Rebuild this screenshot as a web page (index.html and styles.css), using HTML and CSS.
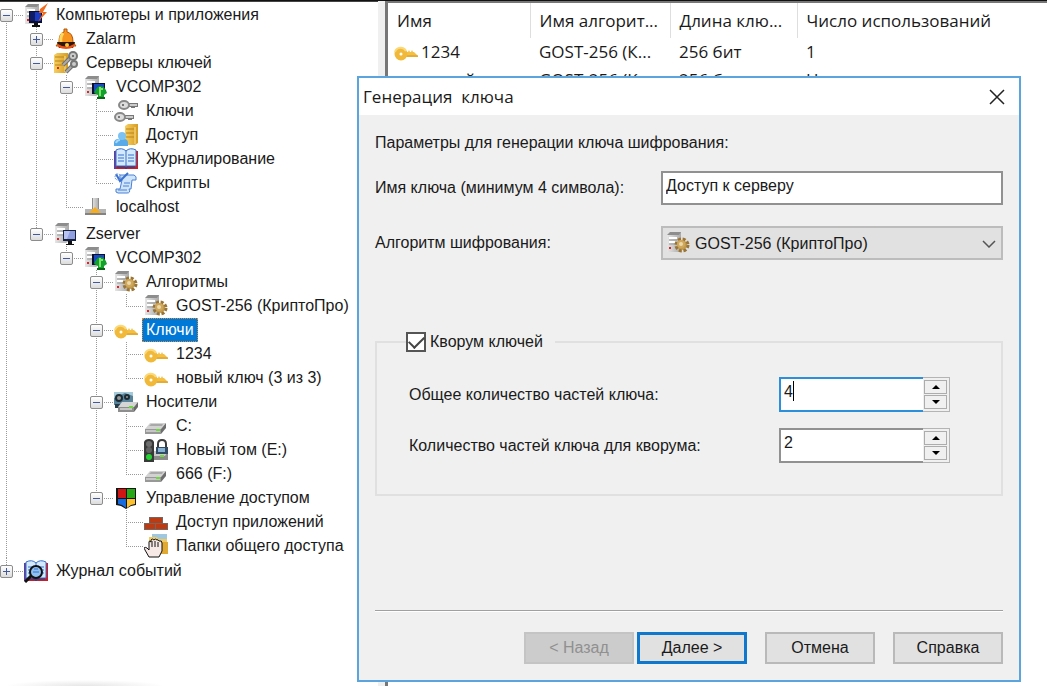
FILE: index.html
```
<!DOCTYPE html>
<html lang="ru">
<head>
    <meta charset="utf-8">
    <title>Генерация ключа</title>
    <link rel="stylesheet" href="styles.css">
</head>
<body>
    <!-- Icon set, all on a 24x24 grid -->
    <svg class="defs" width="0" height="0" aria-hidden="true">
        <linearGradient id="steel" x1="0" x2="1"><stop offset="0" stop-color="#e6e6e6"/><stop offset="1" stop-color="#a9a9a9"/></linearGradient>
        <linearGradient id="gold" x1="0" x2="1"><stop offset="0" stop-color="#f6cf62"/><stop offset="1" stop-color="#d69c22"/></linearGradient>
        <symbol id="tower" viewBox="0 0 24 24">
            <path d="M1 4l3-3h11v18l-3 2H1z" fill="url(#steel)"/>
            <path d="M1 4l3-3h11l-2 3z" fill="#8d8d8d"/>
            <path d="M3 7h8M3 11h8" stroke="#fff" stroke-width="2"/>
            <path d="M3 9h8M3 13h8" stroke="#9a9a9a"/>
            <path d="M3 16h2v2H3z" fill="#d8262c"/>
        </symbol>
        <symbol id="key" viewBox="0 0 24 24">
            <path d="M12 14v-2h2l1-2 1 2h1l1-2 1 2h1l4 4v1H12z" fill="#f3bf45"/>
            <path d="M12 16h12" stroke="#d79a24"/>
            <circle cx="7" cy="14" r="4" fill="none" stroke="#f1b93a" stroke-width="5"/>
            <path d="M1 12a6 6 0 0 1 11-1" fill="none" stroke="#fbd978" stroke-width="2"/>
        </symbol>
        <symbol id="gear" viewBox="0 0 24 24">
            <circle cx="16" cy="14" r="5" fill="#c39a4c"/>
            <circle cx="16" cy="14" r="6" fill="none" stroke="#9a7434" stroke-width="3" stroke-dasharray="3 1.7"/>
            <circle cx="15" cy="13" r="4" fill="#cfa85c"/>
            <circle cx="15" cy="13" r="2" fill="#ecd9ab"/>
        </symbol>
        <symbol id="algorithm" viewBox="0 0 24 24"><use href="#tower"/><use href="#gear"/></symbol>
        <symbol id="computer" viewBox="0 0 24 24">
            <use href="#tower"/>
            <path d="M9 8h13v11H9z" fill="#17223f"/><path d="M10 9h11v8H10z" fill="#8f9fe0"/>
            <path d="M10 9h6l-3 8h-3z" fill="#b9c3f1"/><path d="M14 19h4v3h-4zM12 22h8v1h-8z" fill="#111"/>
        </symbol>
        <symbol id="computer-app" viewBox="0 0 24 24">
            <use href="#tower"/>
            <path d="M5 8h13v12H5z" fill="#0b1030"/><path d="M6 9h11v9H6z" fill="#1b3cc0"/>
            <path d="M6 9h5v9H6z" fill="#101c66"/><path d="M10 20h4v3h-4zM8 22h8v2H8z" fill="#111"/>
            <path d="M24 0l-8 6-1 4h4l-5 9 9-10h-4z" fill="#f26a1b"/>
        </symbol>
        <symbol id="computer-on" viewBox="0 0 24 24">
            <use href="#tower"/>
            <path d="M8 8h13v11H8z" fill="#0b1030"/><path d="M10 9h10v8H10z" fill="#1a49c4"/>
            <path d="M10 18q2-6 6-7 5 0 7 7l-3 2v3h-6v-3z" fill="#14a02c"/>
            <path d="M16 12v9M15 14h4" stroke="#7ce66b" stroke-width="2"/><path d="M13 22h8v2h-8z" fill="#0a6614"/>
        </symbol>
        <symbol id="bell" viewBox="0 0 24 24">
            <path d="M10 5V2h3v3q6 1 6 10l3 4H2l3-4Q5 6 10 5z" fill="#f7941d" stroke="#b65309"/>
            <path d="M9 6q-3 4-2 9" stroke="#ffd65c" stroke-width="3" fill="none"/>
            <path d="M3 15h18l-2 6H5z" fill="#2d1605"/><path d="M4 17q8 5 16 0v3q-8 4-16 0z" fill="#e8521a"/>
            <circle cx="13" cy="18" r="2" fill="#ffc533"/>
        </symbol>
        <symbol id="grey-key" viewBox="0 0 24 24">
            <path d="M11 6h13M19 6v3" stroke="#777" stroke-width="4"/><path d="M11 6h12" stroke="#ccc" stroke-width="2"/>
            <ellipse cx="10" cy="6" rx="5" ry="4" fill="#ddd" stroke="#888" stroke-width="2"/>
            <circle cx="9" cy="6" r="1" fill="#555"/>
        </symbol>
        <symbol id="grey-keys" viewBox="0 0 24 24">
            <use href="#grey-key"/>
            <path d="M8 18h12M16 18v3" stroke="#777" stroke-width="4"/><path d="M8 18h11" stroke="#ccc" stroke-width="2"/>
            <ellipse cx="6" cy="18" rx="5" ry="4" fill="#ddd" stroke="#888" stroke-width="2"/><circle cx="5" cy="18" r="1" fill="#555"/>
        </symbol>
        <symbol id="gold-tower" viewBox="0 0 24 24">
            <path d="M0 4l3-2h11v18l-3 2H0z" fill="url(#gold)"/>
            <path d="M1 6h9M1 10h9M1 14h9" stroke="#b98319"/><path d="M11 5v16" stroke="#fbe08f"/>
            <path d="M3 16h2v2H3z" fill="#d8262c"/>
        </symbol>
        <symbol id="key-server" viewBox="0 0 24 24">
            <use href="#gold-tower"/>
            <path d="M18 5l-9 9M21 12l-9 9" stroke="#6e6e6e" stroke-width="4"/>
            <path d="M18 5l-9 9M21 12l-9 9" stroke="#aaa" stroke-width="2"/>
            <circle cx="19" cy="5" r="4" fill="#ccc" stroke="#777" stroke-width="2"/>
            <circle cx="20" cy="13" r="3" fill="#ccc" stroke="#777" stroke-width="2"/>
            <circle cx="19" cy="5" r="1" fill="#555"/>
        </symbol>
        <symbol id="access" viewBox="0 0 24 24">
            <path d="M11 3l3-2h10v19l-3 2H11z" fill="url(#gold)"/>
            <path d="M12 6h8M12 10h8M12 14h8" stroke="#b98319"/><path d="M21 4v17" stroke="#fbe08f"/>
            <path d="M0 23v-4q1-3 4-3h6q4 0 4 4v3z" fill="#58aae8"/><path d="M2 20q1-3 4-3" stroke="#a8dafb" fill="none" stroke-width="2"/>
            <circle cx="8" cy="13" r="4" fill="#7cc3f4"/>
        </symbol>
        <symbol id="book" viewBox="0 0 24 24">
            <path d="M0 4h24v18H0z" fill="#c41f2b"/><path d="M0 4h2v18H0z" fill="#5c3f9c"/>
            <path d="M2 3q6-3 10 1 4-4 10-1v16H2z" fill="#d4e9fd" stroke="#3770cd"/>
            <path d="M12 4v15M4 8h6M4 11h6M4 14h6M14 8h6M14 11h6M14 14h6" stroke="#3770cd"/>
            <path d="M3 20h8l1 2 1-2h8" stroke="#27418e" fill="none"/>
        </symbol>
        <symbol id="log" viewBox="0 0 24 24">
            <use href="#book"/>
            <circle cx="12" cy="13" r="6" fill="#8fc0f2" stroke="#111" stroke-width="2"/>
            <path d="M9 13h6M10 10h4" stroke="#3770cd"/><path d="M7 17l-6 6" stroke="#111" stroke-width="3"/>
        </symbol>
        <symbol id="script" viewBox="0 0 24 24">
            <path d="M6 4h14q3 1 2 5h-4l-1 9h-2q2 4-2 4H4q-3 0-2-4h4L8 9q-3 0-2-5z" fill="#cfe5fb" stroke="#4b80d6"/>
            <path d="M10 12h6M9 15h6M4 19h9" stroke="#4b80d6"/>
            <path d="M2 3l4 7 8-8" fill="none" stroke="#3c70cf" stroke-width="2"/>
            <circle cx="4" cy="6" r="3" fill="none" stroke="#6998e4" stroke-dasharray="2 1"/>
        </symbol>
        <symbol id="network" viewBox="0 0 24 24">
            <path d="M8 3h7v14H8z" fill="url(#steel)"/><path d="M8 3h1v12H8zM14 3h1v12h-1z" fill="#8c8c8c"/>
            <path d="M1 14h21v6H1z" fill="#b5b5b5"/><path d="M1 18h21v2H1z" fill="#838383"/>
            <path d="M5 18l6-6 6 6z" fill="#f6ad1f"/>
        </symbol>
        <symbol id="drive" viewBox="0 0 24 24">
            <path d="M6 9h16l-5 6H1z" fill="#d2d2d2"/><path d="M1 15h16v5H1z" fill="#989898"/>
            <path d="M17 15l5-6v5l-5 6z" fill="#6e6e6e"/><path d="M2 16h14v2H2z" fill="#c6c6c6"/>
            <path d="M12 15h4v2h-4z" fill="#6bdc3a"/><path d="M7 10h12l-1 2H5z" fill="#a9a9a9"/>
        </symbol>
        <symbol id="media" viewBox="0 0 24 24">
            <path d="M0 2h19v13H0z" fill="#568399"/><path d="M0 2h19v4l-8-3-11 5z" fill="#a4c9d8"/>
            <circle cx="5" cy="8" r="3" fill="#999" stroke="#1c2b33" stroke-width="2"/><circle cx="13" cy="7" r="2" fill="#999" stroke="#1c2b33" stroke-width="2"/>
            <path d="M1 14h8v4H1z" fill="#263c48"/>
            <path d="M8 12h16l-4 5H4z" fill="#d5d5d5"/><path d="M4 17h16v5H4z" fill="#8e8e8e"/><path d="M20 17l4-5v5l-4 5z" fill="#696969"/>
            <path d="M6 18h12v2H6z" fill="#c4c4c4"/><path d="M15 16h4v2h-4z" fill="#6bdc3a"/>
        </symbol>
        <symbol id="locked-drive" viewBox="0 0 24 24">
            <path d="M9 16h15v6H9z" fill="#8b8b8b"/><path d="M10 13h14l-3 5H9z" fill="#c9c9c9"/>
            <path d="M14 10V6q0-4 4-4t4 4v4" fill="none" stroke="#3c3c3c" stroke-width="2"/>
            <path d="M12 9h12v7H12z" fill="#324c65"/><path d="M14 10h7v4h-7z" fill="#86b1d3"/>
            <path d="M16 17h4v2h-4z" fill="#6bdc3a"/>
            <path d="M0 4q1-3 5-3t5 3v20H0z" fill="#393939"/>
            <circle cx="5" cy="6" r="3" fill="#6e6e6e"/><circle cx="5" cy="12" r="3" fill="#626262"/><circle cx="5" cy="19" r="3" fill="#24d232"/>
        </symbol>
        <symbol id="shield" viewBox="0 0 24 24">
            <path d="M2 2h20v17l-5 1-5 3-5-3-5-1z" fill="#151515"/>
            <path d="M4 3h8v9H4z" fill="#d01515"/><path d="M13 3h8v9h-8z" fill="#27a817"/>
            <path d="M4 13h8v9l-4-3-4-1z" fill="#176be0"/><path d="M13 13h8v5l-4 1-4 3z" fill="#fcc12c"/>
        </symbol>
        <symbol id="bricks" viewBox="0 0 24 24">
            <path d="M5 7h14v6h5v7H0v-7h5z" fill="#77665f"/>
            <path d="M6 8h12v5H6zM1 14h10v5H1zM12 14h11v5H12z" fill="#bd3b12"/>
        </symbol>
        <symbol id="shared" viewBox="0 0 24 24">
            <path d="M8 0h15v12H8z" fill="#9fc8e0"/><path d="M5 3h8l1 2h9v14H5z" fill="#f1cb62"/><path d="M10 8h14v12H10z" fill="#dfa934"/>
            <path d="M5 23l-4-7q-2-4 2-2l2 2V8q0-2 2 0V6q1-2 3 0 1-2 3 0 1-1 2 1 3-1 3 2v8l-3 6z" fill="#f7e9e6" stroke="#111"/>
            <path d="M8 7v6M11 7v6M14 8v5" stroke="#111"/>
        </symbol>
    </svg>

    <div class="workspace">
        <nav class="tree-pane">
            <ul class="tree">
                <li>
                    <div class="node"><button class="toggle open" aria-label="Свернуть"></button><svg class="icon"><use href="#computer-app"/></svg><span class="label">Компьютеры и приложения</span></div>
                    <ul>
                        <li>
                            <div class="node"><button class="toggle" aria-label="Развернуть"></button><svg class="icon"><use href="#bell"/></svg><span class="label">Zalarm</span></div>
                        </li>
                        <li>
                            <div class="node"><button class="toggle open" aria-label="Свернуть"></button><svg class="icon"><use href="#key-server"/></svg><span class="label">Серверы ключей</span></div>
                            <ul>
                                <li>
                                    <div class="node"><button class="toggle open" aria-label="Свернуть"></button><svg class="icon"><use href="#computer-on"/></svg><span class="label">VCOMP302</span></div>
                                    <ul>
                                        <li><div class="node leaf"><svg class="icon"><use href="#grey-keys"/></svg><span class="label">Ключи</span></div></li>
                                        <li><div class="node leaf"><svg class="icon"><use href="#access"/></svg><span class="label">Доступ</span></div></li>
                                        <li><div class="node leaf"><svg class="icon"><use href="#book"/></svg><span class="label">Журналирование</span></div></li>
                                        <li><div class="node leaf"><svg class="icon"><use href="#script"/></svg><span class="label">Скрипты</span></div></li>
                                    </ul>
                                </li>
                                <li><div class="node leaf"><svg class="icon"><use href="#network"/></svg><span class="label">localhost</span></div></li>
                            </ul>
                        </li>
                        <li class="branch-on">
                            <div class="node"><button class="toggle open" aria-label="Свернуть"></button><svg class="icon"><use href="#computer"/></svg><span class="label">Zserver</span></div>
                            <ul>
                                <li>
                                    <div class="node"><button class="toggle open" aria-label="Свернуть"></button><svg class="icon"><use href="#computer-on"/></svg><span class="label">VCOMP302</span></div>
                                    <ul>
                                        <li>
                                            <div class="node"><button class="toggle open" aria-label="Свернуть"></button><svg class="icon"><use href="#algorithm"/></svg><span class="label">Алгоритмы</span></div>
                                            <ul>
                                                <li><div class="node leaf"><svg class="icon"><use href="#algorithm"/></svg><span class="label">GOST-256 (КриптоПро)</span></div></li>
                                            </ul>
                                        </li>
                                        <li>
                                            <div class="node"><button class="toggle open" aria-label="Свернуть"></button><svg class="icon"><use href="#key"/></svg><span class="label selected">Ключи</span></div>
                                            <ul>
                                                <li><div class="node leaf"><svg class="icon"><use href="#key"/></svg><span class="label">1234</span></div></li>
                                                <li><div class="node leaf"><svg class="icon"><use href="#key"/></svg><span class="label">новый ключ (3 из 3)</span></div></li>
                                            </ul>
                                        </li>
                                        <li>
                                            <div class="node"><button class="toggle open" aria-label="Свернуть"></button><svg class="icon"><use href="#media"/></svg><span class="label">Носители</span></div>
                                            <ul>
                                                <li><div class="node leaf"><svg class="icon"><use href="#drive"/></svg><span class="label">C:</span></div></li>
                                                <li><div class="node leaf"><svg class="icon"><use href="#locked-drive"/></svg><span class="label">Новый том (E:)</span></div></li>
                                                <li><div class="node leaf"><svg class="icon"><use href="#drive"/></svg><span class="label">666 (F:)</span></div></li>
                                            </ul>
                                        </li>
                                        <li>
                                            <div class="node"><button class="toggle open" aria-label="Свернуть"></button><svg class="icon"><use href="#shield"/></svg><span class="label">Управление доступом</span></div>
                                            <ul>
                                                <li><div class="node leaf"><svg class="icon"><use href="#bricks"/></svg><span class="label">Доступ приложений</span></div></li>
                                                <li><div class="node leaf"><svg class="icon"><use href="#shared"/></svg><span class="label">Папки общего доступа</span></div></li>
                                            </ul>
                                        </li>
                                    </ul>
                                </li>
                            </ul>
                        </li>
                    </ul>
                </li>
                <li>
                    <div class="node"><button class="toggle" aria-label="Развернуть"></button><svg class="icon"><use href="#log"/></svg><span class="label">Журнал событий</span></div>
                </li>
            </ul>
        </nav>

        <main class="list-pane">
            <table class="keys">
                <colgroup><col class="col-name"><col class="col-algorithm"><col class="col-length"><col></colgroup>
                <thead>
                    <tr><th>Имя</th><th>Имя алгорит...</th><th>Длина клю...</th><th>Число использований</th></tr>
                </thead>
                <tbody>
                    <tr><td><span class="key-name"><svg class="icon"><use href="#key"/></svg>1234</span></td><td>GOST-256 (К...</td><td>256 бит</td><td>1</td></tr>
                    <tr><td><span class="key-name"><svg class="icon"></svg>новый...</span></td><td>GOST-256 (К...</td><td>256 бит</td><td>Нет</td></tr>
                </tbody>
            </table>
        </main>
    </div>

    <form class="dialog" role="dialog" aria-labelledby="dialog-title" action="javascript:void(0)">
        <header class="title-bar">
            <h1 id="dialog-title">Генерация&nbsp; ключа</h1>
            <button type="button" class="close" aria-label="Закрыть">
                <svg width="16" height="16" viewBox="0 0 16 16"><path d="M1 1l14 14M15 1L1 15" stroke="#222" stroke-width="1.5"/></svg>
            </button>
        </header>
        <div class="dialog-body">
            <p class="intro">Параметры для генерации ключа шифрования:</p>
            <div class="field">
                <label for="key-name">Имя ключа (минимум 4 символа):</label>
                <input type="text" id="key-name" class="text-box" value="Доступ к серверу">
            </div>
            <div class="field">
                <label for="algorithm-select">Алгоритм шифрования:</label>
                <div class="combo">
                    <select id="algorithm-select"><option>GOST-256 (КриптоПро)</option></select>
                    <svg class="combo-icon" width="24" height="24"><use href="#algorithm"/></svg>
                    <svg class="combo-arrow" width="14" height="8" viewBox="0 0 14 8"><path d="M1 1l6 6 6-6" fill="none" stroke="#555" stroke-width="1.5"/></svg>
                </div>
            </div>
            <fieldset class="quorum">
                <legend><input type="checkbox" id="quorum" checked><label for="quorum">Кворум ключей</label></legend>
                <div class="quorum-row">
                    <label for="total">Общее количество частей ключа:</label>
                    <div class="spinner focused">
                        <input type="text" id="total" value="4"><span class="caret"></span>
                        <div class="spin-buttons">
                            <button type="button" class="up" aria-label="Больше"></button>
                            <button type="button" class="down" aria-label="Меньше"></button>
                        </div>
                    </div>
                </div>
                <div class="quorum-row">
                    <label for="needed">Количество частей ключа для кворума:</label>
                    <div class="spinner">
                        <input type="text" id="needed" value="2">
                        <div class="spin-buttons">
                            <button type="button" class="up" aria-label="Больше"></button>
                            <button type="button" class="down" aria-label="Меньше"></button>
                        </div>
                    </div>
                </div>
            </fieldset>
            <footer class="actions">
                <button type="button" disabled>&lt; Назад</button>
                <button type="submit" class="default">Далее &gt;</button>
                <button type="button" class="apart">Отмена</button>
                <button type="button" class="apart">Справка</button>
            </footer>
        </div>
    </form>
</body>
</html>
```
FILE: styles.css
```
* {
    box-sizing: border-box;
}
body {
    margin: 0;
    min-height: 100vh;
    overflow: hidden;
    background: #fff;
    color: #1a1a1a;
    font-family: "Liberation Sans", Arial, sans-serif;
    font-size: 16px;
}
button, input, select {
    margin: 0;
    color: inherit;
    font: inherit;
}
/* Not display: none, the gradients would stop working */
.defs {
    position: absolute;
}
.icon {
    flex: none;
    width: 24px;
    height: 24px;
}

/* Two panes with a splitter between them */
.workspace {
    display: grid;
    grid-template-columns: 378px 1fr;
    min-height: 100vh;
    border-top: 1px solid #111;
    background: #f0f0f0;
}
.tree-pane {
    border-top: 1px solid #444;
    background: radial-gradient(ellipse 80px 6px at 85px 100%, #e6e6e6, #fff);
}
.list-pane {
    margin-left: 7px;
    border-top: 2px solid #777;
    border-left: 3px solid #777;
    background: #fff;
}

/* Tree: dotted branches are drawn as backgrounds of the items */
.tree, .tree ul {
    margin: 0;
    padding: 0;
    list-style: none;
}
.tree {
    padding-top: 1px;
}
.tree ul {
    padding-left: 30px;
}
.tree li {
    background: repeating-linear-gradient(#999 0 1px, transparent 1px 2px) 6px 0 / 1px 100% no-repeat;
}
.tree li:last-child {
    background-size: 1px 12px;
}
.tree > li:first-child {
    background-position: 6px 12px;
}
.tree > li:last-child {
    padding-top: 1px;
}
.tree .branch-on {
    padding-top: 3px;
    background-size: 1px 100%;
}
.node {
    display: flex;
    align-items: center;
    height: 24px;
    background: repeating-linear-gradient(90deg, #999 0 1px, transparent 1px 2px) 6px 12px / 17px 1px no-repeat;
}
.leaf {
    padding-left: 24px;
}
.toggle {
    flex: none;
    width: 13px;
    height: 13px;
    margin-right: 11px;
    padding: 0;
    border: 1px solid #8c8c8c;
    border-radius: 2px;
    background:
        linear-gradient(#44599a, #44599a) center / 7px 1px no-repeat,
        linear-gradient(#44599a, #44599a) center / 1px 7px no-repeat,
        linear-gradient(#fff, #dcdcdc);
}
.toggle.open {
    background:
        linear-gradient(#44599a, #44599a) center / 7px 1px no-repeat,
        linear-gradient(#fff, #dcdcdc);
}
.label {
    margin-left: 4px;
    padding: 0 4px;
    line-height: 24px;
    white-space: nowrap;
}
.selected {
    outline: 1px dotted #e08a30;
    outline-offset: -1px;
    background: #0078d7;
    color: #fff;
}

/* List of keys */
.keys {
    width: 100%;
    table-layout: fixed;
    border-collapse: collapse;
    font-family: "Open Sans", "Segoe UI", sans-serif;
    font-size: 17px;
}
.col-name {
    width: 142px;
}
.col-algorithm {
    width: 140px;
}
.col-length {
    width: 127px;
}
.keys th {
    height: 35px;
    padding: 0 0 0 9px;
    border-right: 1px solid #dedede;
    font-weight: normal;
    line-height: 24px;
    text-align: left;
    white-space: nowrap;
}
.keys th:last-child {
    border-right: 0;
}
.keys td {
    height: 28px;
    padding: 0 0 0 9px;
    line-height: 24px;
    white-space: nowrap;
}
.keys td:first-child {
    padding-left: 6px;
}
.key-name {
    display: flex;
    align-items: center;
    gap: 3px;
}

/* Dialog window over the panes */
.dialog {
    position: absolute;
    top: 76px;
    left: 357px;
    width: 664px;
    border: 2px solid #5aa5de;
    background: #f0f0f0;
}
.title-bar {
    display: flex;
    align-items: center;
    justify-content: space-between;
    height: 37px;
    padding: 0 14px 0 4px;
    background: #fff;
}
.title-bar h1 {
    margin: 0;
    font-family: "Open Sans", "Segoe UI", sans-serif;
    font-size: 17px;
    font-weight: normal;
    line-height: 24px;
}
.close {
    display: flex;
    padding: 0;
    border: 0;
    background: none;
}
.dialog-body {
    padding: 18px 16px 16px;
}
.intro {
    margin: 0 0 18px;
    line-height: 20px;
}
.field {
    display: grid;
    grid-template-columns: 286px 1fr;
    align-items: center;
    margin-bottom: 21px;
}
.text-box {
    width: 100%;
    height: 34px;
    padding: 0 3px 4px;
    border: 2px solid #919191;
    background: #fff;
    outline: none;
}
.combo {
    position: relative;
}
.combo select {
    display: block;
    width: 100%;
    height: 34px;
    padding: 0 32px;
    border: 2px solid #bcbcbc;
    border-radius: 0;
    background: #e1e1e1;
    appearance: none;
}
.combo-icon {
    position: absolute;
    top: 5px;
    left: 5px;
}
.combo-arrow {
    position: absolute;
    top: 14px;
    right: 7px;
}

.quorum {
    margin: 72px 0 0;
    padding: 25px 51px 31px 32px;
    border: 2px solid #e0e0e0;
}
.quorum legend {
    display: flex;
    align-items: center;
    gap: 4px;
    height: 20px;
    margin-left: -3px;
    padding: 0 12px 0 0;
}
.quorum legend input {
    display: grid;
    place-items: center;
    width: 20px;
    height: 20px;
    border: 2px solid #555;
    background: #fff;
    appearance: none;
}
.quorum legend input:checked::before {
    content: "";
    width: 13px;
    height: 7px;
    margin-bottom: 4px;
    border: solid #444;
    border-width: 0 0 2px 2px;
    transform: rotate(-45deg);
}
.quorum-row {
    display: flex;
    align-items: center;
    justify-content: space-between;
}
.quorum-row + .quorum-row {
    margin-top: 16px;
}
.spinner {
    position: relative;
    display: flex;
    width: 171px;
    height: 35px;
}
.spinner input {
    flex: 1;
    min-width: 0;
    padding: 0 3px 5px;
    border: 2px solid #919191;
    border-right: 0;
    background: #fff;
    outline: none;
}
.focused input {
    border-color: #2b8fdc;
}
.caret {
    position: absolute;
    top: 4px;
    left: 14px;
    width: 1px;
    height: 20px;
    background: #000;
}
.spin-buttons {
    display: flex;
    flex-direction: column;
    gap: 1px;
    width: 27px;
    padding: 2px 2px 2px 1px;
    border: 1px solid #b4b4b4;
    border-left: 0;
}
.spin-buttons button {
    display: grid;
    flex: 1;
    place-items: center;
    padding: 0;
    border: 1px solid #acacac;
    background: #f0f0f0;
}
.spin-buttons button::before {
    content: "";
    border: 4px solid transparent;
}
.spin-buttons .up::before {
    border-top: 0;
    border-bottom-color: #000;
}
.spin-buttons .down::before {
    border-bottom: 0;
    border-top-color: #000;
}

.actions {
    display: flex;
    justify-content: flex-end;
    gap: 3px;
    margin-top: 114px;
    padding-top: 21px;
    border-top: 1px solid #a0a0a0;
    box-shadow: inset 0 1px #fff;
}
.actions button {
    width: 110px;
    height: 32px;
    padding: 0;
    border: 2px solid #b9b9b9;
    background: #e1e1e1;
}
.actions button:disabled {
    border-color: #c4c4c4;
    background: #ccc;
    color: #909090;
}
.actions .default {
    border: 3px solid #0f78cc;
}
.actions .apart {
    margin-left: 15px;
}
```
